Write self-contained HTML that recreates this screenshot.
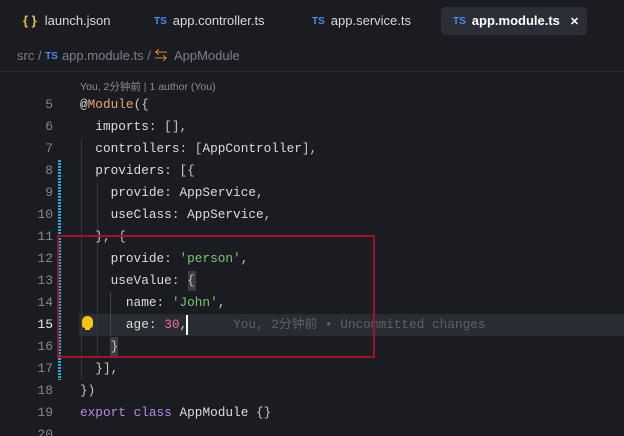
<!DOCTYPE html>
<html><head><style>
html,body{margin:0;width:624px;height:436px;overflow:hidden}
body{background:#1b1c21;position:relative;font-family:"Liberation Sans","Noto Sans CJK SC",sans-serif;}
.tab{position:absolute;top:7px;height:28px;line-height:28px;font-size:13px;color:#d8d8d8;white-space:nowrap}
.ts{color:#4c8ce8;font-size:10px;font-weight:bold;margin-right:6px;vertical-align:1px}
.act{left:441px;width:146px;background:#2b2d37;border-radius:4px;color:#fff;font-weight:bold;padding-left:12px;box-sizing:border-box}
.bc{position:absolute;top:45px;left:17px;font-size:13px;color:#7b7f8c;white-space:nowrap}
.sep{position:absolute;top:71px;left:0;width:624px;height:1px;background:#2c2e35}
.lens{position:absolute;top:79px;left:80px;font-size:10.5px;color:#8b8e97}
.ln{position:absolute;left:0;width:53px;text-align:right;font-family:"Liberation Mono",monospace;font-size:13px;color:#858892;}
.code{position:absolute;left:80px;font-family:"Liberation Mono",monospace;font-size:12.75px;color:#dcdcdc;}
.row{height:22px;line-height:22px;white-space:pre}
.k{color:#b48ae6}.s{color:#7cc47a}.n{color:#ef6fa3}.d{color:#e9a66f}.p{color:#c6c6c6}
</style></head><body>
<div class="tab" style="left:23px"><span style="color:#e2c04a;font-weight:bold;margin-right:8px">{ }</span>launch.json</div>
<div class="tab" style="left:154px"><span class="ts">TS</span>app.controller.ts</div>
<div class="tab" style="left:312px"><span class="ts">TS</span>app.service.ts</div>
<div class="tab act"><span class="ts">TS</span>app.module.ts<span style="margin-left:10px;font-size:11px">✕</span></div>
<div class="bc">src / <span class="ts" style="margin-right:4px">TS</span>app.module.ts / <span style="color:#e5953c">⇆</span>&nbsp; AppModule</div>
<div class="sep"></div>
<div class="lens">You, 2分钟前 | 1 author (You)</div>
<div style="position:absolute;left:79px;top:314px;width:545px;height:22px;background:#2a2c34"></div>
<div style="position:absolute;left:58px;top:160px;width:3px;height:220px;background:repeating-linear-gradient(#2aa7d3 0 2px,#1b1c21 2px 3px)"></div>
<div style="position:absolute;left:81px;top:138px;width:1px;height:242px;background:#34363e"></div>
<div style="position:absolute;left:97px;top:182px;width:1px;height:176px;background:#34363e"></div>
<div style="position:absolute;left:110px;top:292px;width:1px;height:44px;background:#444650"></div>
<div style="position:absolute;left:110px;top:337px;width:8px;height:20px;background:#3a3d46"></div>
<div style="position:absolute;left:188px;top:271px;width:8px;height:20px;background:#3a3d46"></div>
<div style="position:absolute;left:82px;top:316px;width:11px;height:12px;background:#f2c314;border-radius:6px 6px 3px 3px"></div>
<div style="position:absolute;left:85px;top:327px;width:5px;height:3px;background:#f2c314"></div>
<div style="position:absolute;left:186px;top:315px;width:2px;height:20px;background:#fff"></div>
<div class="ln" style="top:94px"><div class="row">5</div><div class="row">6</div><div class="row">7</div><div class="row">8</div><div class="row">9</div><div class="row">10</div><div class="row">11</div><div class="row">12</div><div class="row">13</div><div class="row">14</div><div class="row" style="color:#e8e8e8">15</div><div class="row">16</div><div class="row">17</div><div class="row">18</div><div class="row">19</div><div class="row">20</div></div>
<div class="code" style="top:94px"><div class="row">@<span class="d">Module</span><span class="p">({</span></div><div class="row">  imports<span class="p">: [],</span></div><div class="row">  controllers<span class="p">: [</span>AppController<span class="p">],</span></div><div class="row">  providers<span class="p">: [{</span></div><div class="row">    provide<span class="p">:</span> AppService<span class="p">,</span></div><div class="row">    useClass<span class="p">:</span> AppService<span class="p">,</span></div><div class="row"><span class="p">  }, {</span></div><div class="row">    provide<span class="p">:</span> <span class="s">'person'</span><span class="p">,</span></div><div class="row">    useValue<span class="p">: {</span></div><div class="row">      name<span class="p">:</span> <span class="s">'John'</span><span class="p">,</span></div><div class="row">      age<span class="p">:</span> <span class="n">30</span><span class="p">,</span>      <span style="color:#5d606a">You, 2分钟前 • Uncommitted changes</span></div><div class="row"><span class="p">    }</span></div><div class="row"><span class="p">  }],</span></div><div class="row"><span class="p">})</span></div><div class="row"><span class="k">export</span> <span class="k">class</span> AppModule <span class="p">{}</span></div></div>
<div style="position:absolute;left:57px;top:235px;width:314px;height:119px;border:2px solid #a0142a"></div>
</body></html>
